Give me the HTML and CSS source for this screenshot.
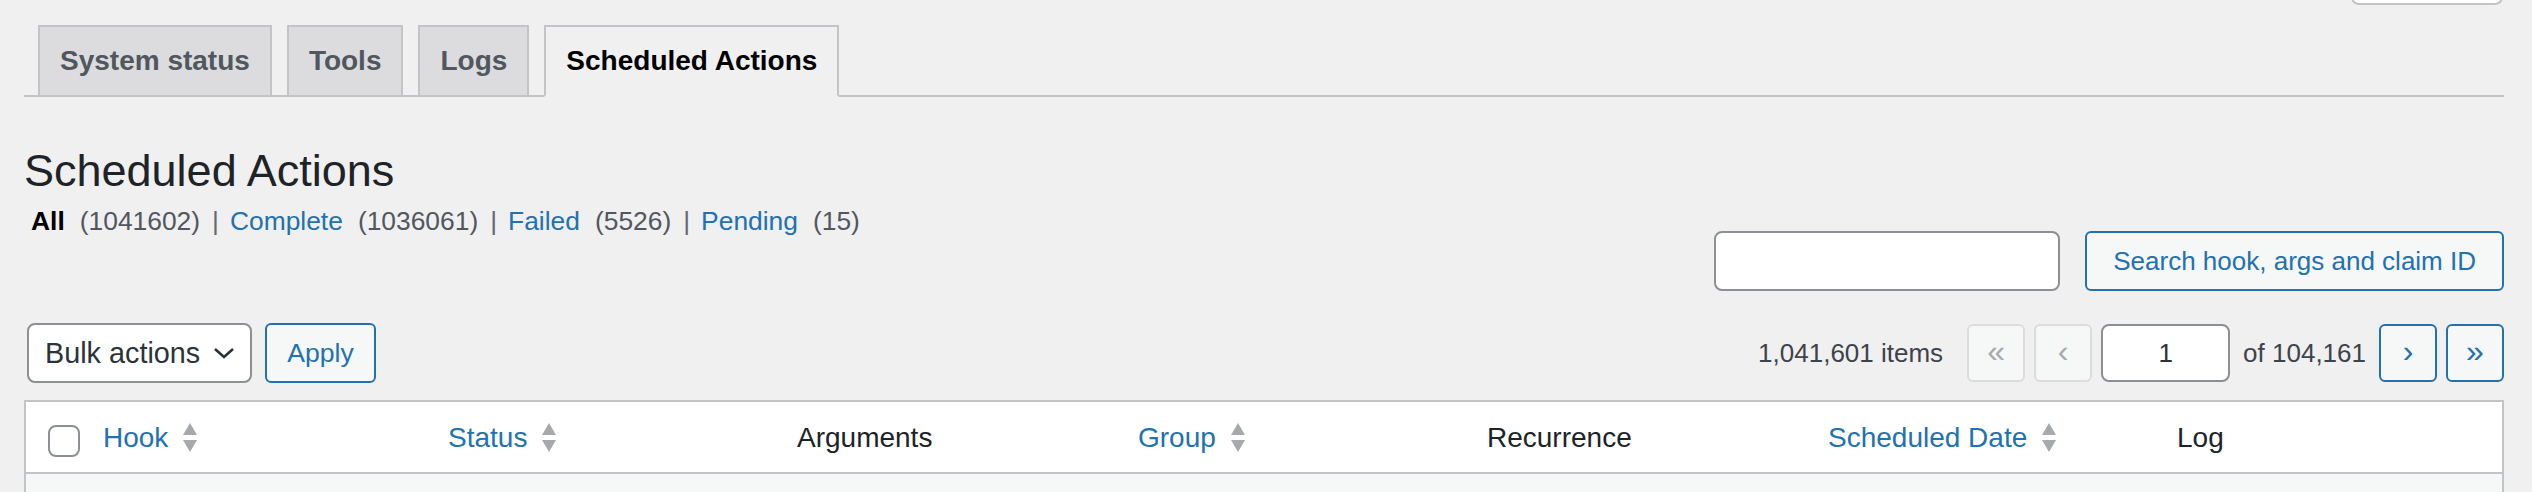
FILE: index.html
```html
<!DOCTYPE html>
<html lang="en">
<head>
<meta charset="utf-8">
<title>Scheduled Actions</title>
<link rel="stylesheet" href="styles.css">
</head>
<body>
<div class="page">
  <div class="screen-meta-tab"></div>

  <nav class="nav-tabs">
    <a class="nav-tab" href="#">System status</a>
    <a class="nav-tab" href="#">Tools</a>
    <a class="nav-tab" href="#">Logs</a>
    <a class="nav-tab nav-tab-active" href="#">Scheduled Actions</a>
  </nav>

  <h1 class="page-title">Scheduled Actions</h1>

  <div class="filters-row">
    <div class="subsubsub">
      <a class="filter current" href="#">All</a><span class="count">(1041602)</span><span class="sep">|</span>
      <a class="filter" href="#">Complete</a><span class="count">(1036061)</span><span class="sep">|</span>
      <a class="filter" href="#">Failed</a><span class="count">(5526)</span><span class="sep">|</span>
      <a class="filter" href="#">Pending</a><span class="count">(15)</span>
    </div>
    <div class="search-box">
      <input class="search-input" type="search" aria-label="Search">
      <button class="btn search-btn" type="button">Search hook, args and claim ID</button>
    </div>
  </div>

  <div class="tablenav">
    <div class="bulk">
      <div class="select">
        <span>Bulk actions</span>
        <svg class="chev" width="22" height="12" viewBox="0 0 22 12"><polyline points="2,2 11,10 20,2" fill="none" stroke="#2c3338" stroke-width="2.6"/></svg>
      </div>
      <button class="btn apply-btn" type="button">Apply</button>
    </div>
    <div class="pagination">
      <span class="displaying-num">1,041,601 items</span>
      <span class="page-btn disabled">«</span>
      <span class="page-btn disabled">‹</span>
      <input class="page-input" type="text" value="1" aria-label="Current page">
      <span class="total-pages">of 104,161</span>
      <a class="page-btn" href="#">›</a>
      <a class="page-btn" href="#">»</a>
    </div>
  </div>

  <div class="list-table">
    <div class="thead">
      <div class="th cb"><input class="cb-input" type="checkbox" aria-label="Select all"></div>
      <div class="th sortable"><a href="#">Hook</a><svg class="sort" width="16" height="30" viewBox="0 0 16 30"><polygon points="8,0 15,12 1,12" fill="#a7aaad"/><polygon points="1,17 15,17 8,29" fill="#a7aaad"/></svg></div>
      <div class="th sortable"><a href="#">Status</a><svg class="sort" width="16" height="30" viewBox="0 0 16 30"><polygon points="8,0 15,12 1,12" fill="#a7aaad"/><polygon points="1,17 15,17 8,29" fill="#a7aaad"/></svg></div>
      <div class="th plain">Arguments</div>
      <div class="th sortable"><a href="#">Group</a><svg class="sort" width="16" height="30" viewBox="0 0 16 30"><polygon points="8,0 15,12 1,12" fill="#a7aaad"/><polygon points="1,17 15,17 8,29" fill="#a7aaad"/></svg></div>
      <div class="th plain">Recurrence</div>
      <div class="th sortable"><a href="#">Scheduled Date</a><svg class="sort" width="16" height="30" viewBox="0 0 16 30"><polygon points="8,0 15,12 1,12" fill="#a7aaad"/><polygon points="1,17 15,17 8,29" fill="#a7aaad"/></svg></div>
      <div class="th plain">Log</div>
    </div>
    <div class="tbody">
      <div class="row alt"></div>
    </div>
  </div>
</div>
</body>
</html>
```

FILE: styles.css
```css
html, body {
  margin: 0;
  padding: 0;
  height: 492px;
  overflow: hidden;
  background: #f0f0f1;
}

body {
  font-family: "Liberation Sans", Arial, sans-serif;
  color: #3c434a;
}

.page {
  position: relative;
  padding: 0 28px 0 24px;
}

.screen-meta-tab {
  position: absolute;
  top: -40px;
  right: 29px;
  width: 152px;
  height: 45px;
  box-sizing: border-box;
  background: #fff;
  border: 2px solid #c3c4c7;
  border-top: none;
  border-radius: 0 0 8px 8px;
}

/* Tabs */
.nav-tabs {
  display: flex;
  padding-top: 25px;
  border-bottom: 2px solid #c3c4c7;
}

.nav-tab {
  display: block;
  margin-left: 14px;
  margin-bottom: -2px;
  padding: 10px 20px;
  font-size: 28px;
  line-height: 48px;
  font-weight: bold;
  color: #50575e;
  text-decoration: none;
  background: #dcdcde;
  border: 2px solid #c3c4c7;
  white-space: nowrap;
}

.nav-tab + .nav-tab {
  margin-left: 15px;
}

.nav-tab-active {
  background: #f0f0f1;
  color: #000;
  border-bottom-color: #f0f0f1;
}

/* Heading */
.page-title {
  margin: 45px 0 0;
  padding: 0;
  font-size: 45px;
  line-height: 58px;
  font-weight: 400;
  color: #1d2327;
}

/* Filters + search */
.filters-row {
  display: flex;
  justify-content: space-between;
  align-items: flex-start;
}

.subsubsub {
  display: flex;
  align-items: baseline;
  margin-top: 1px;
  padding-left: 7px;
  font-size: 26.4px;
  line-height: 40px;
  color: #646970;
}

.filter {
  color: #2271b1;
  text-decoration: none;
}

.filter.current {
  color: #000;
  font-weight: bold;
}

.count {
  margin-left: 15px;
  color: #50575e;
}

.sep {
  margin: 0 11px 0 12px;
  color: #646970;
}

.search-box {
  display: flex;
  margin-top: 31px;
}

.search-input {
  box-sizing: border-box;
  width: 346px;
  height: 60px;
  margin: 0 25px 0 0;
  padding: 0 16px;
  background: #fff;
  border: 2px solid #8c8f94;
  border-radius: 8px;
  font-family: inherit;
  font-size: 28px;
  color: #2c3338;
  outline: none;
}

.btn {
  box-sizing: border-box;
  height: 60px;
  margin: 0;
  padding: 0 20px;
  background: #f6f7f7;
  border: 2px solid #2271b1;
  border-radius: 6px;
  color: #2271b1;
  font-family: inherit;
  font-size: 26px;
  line-height: 56px;
  white-space: nowrap;
  cursor: pointer;
}

.search-btn {
  padding: 0 26px;
}

/* Tablenav */
.tablenav {
  display: flex;
  justify-content: space-between;
  align-items: center;
  height: 60px;
  margin-top: 32px;
}

.bulk {
  display: flex;
  align-items: center;
  padding-left: 3px;
}

.select {
  box-sizing: border-box;
  display: flex;
  align-items: center;
  justify-content: space-between;
  width: 225px;
  height: 60px;
  padding: 0 15px 0 16px;
  background: #fff;
  border: 2px solid #8c8f94;
  border-radius: 8px;
  font-size: 28.8px;
  color: #2c3338;
}

.chev {
  display: block;
}

.apply-btn {
  margin-left: 13px;
  width: 111px;
  padding: 0;
  text-align: center;
  font-size: 26.6px;
}

.pagination {
  display: flex;
  align-items: center;
  font-size: 26px;
  color: #3c434a;
}

.displaying-num {
  margin-right: 24px;
}

.page-btn {
  box-sizing: border-box;
  display: flex;
  align-items: center;
  justify-content: center;
  width: 58px;
  height: 58px;
  margin-right: 9px;
  background: #f6f7f7;
  border: 2px solid #2271b1;
  border-radius: 6px;
  color: #2271b1;
  font-size: 32px;
  line-height: 1;
  text-decoration: none;
  padding-bottom: 4px;
}

.page-btn:last-child {
  margin-right: 0;
}

.page-btn.disabled {
  border-color: #dcdcde;
  color: #a7aaad;
}

.page-input {
  box-sizing: border-box;
  width: 129px;
  height: 58px;
  margin: 0 13px 0 0;
  padding: 0;
  background: #fff;
  border: 2px solid #8c8f94;
  border-radius: 8px;
  text-align: center;
  font-family: inherit;
  font-size: 26px;
  color: #2c3338;
  outline: none;
}

.total-pages {
  margin-right: 13px;
}

/* Table */
.list-table {
  margin-top: 17px;
  background: #fff;
  border: 2px solid #c3c4c7;
}

.thead {
  display: grid;
  grid-template-columns: 61px repeat(7, 1fr);
  height: 70px;
  border-bottom: 2px solid #c3c4c7;
}

.th {
  display: flex;
  align-items: center;
  padding-top: 2px;
  font-size: 28px;
  line-height: 40px;
  color: #1d2327;
  white-space: nowrap;
}

.th a {
  color: #2271b1;
  text-decoration: none;
}

.th.sortable {
  padding-left: 16px;
}

.th.plain {
  padding-left: 20px;
}

.th.cb {
  align-items: flex-start;
  padding: 23px 0 0 22px;
}

.cb-input {
  -webkit-appearance: none;
  appearance: none;
  box-sizing: border-box;
  width: 32px;
  height: 32px;
  margin: 0;
  background: #fff;
  border: 2px solid #8c8f94;
  border-radius: 8px;
}

.sort {
  display: block;
  margin-left: 14px;
}

.tbody .row {
  height: 80px;
}

.row.alt {
  background: #f6f7f7;
}
```
